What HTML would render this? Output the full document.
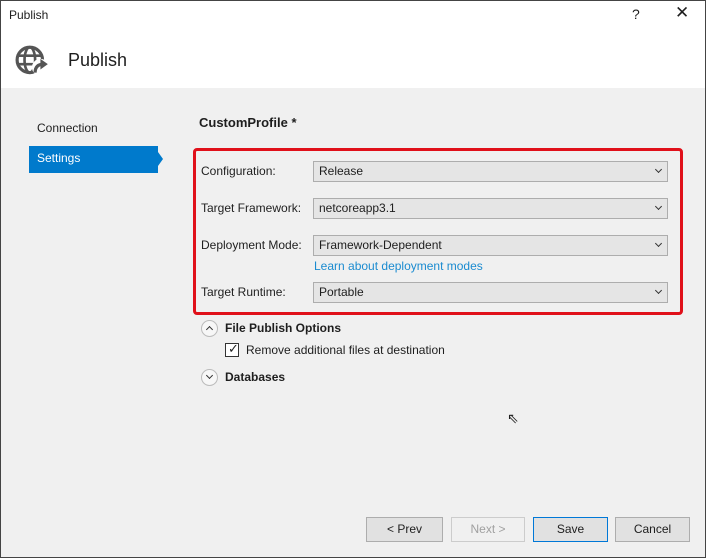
<!DOCTYPE html>
<html><head><style>
*{box-sizing:border-box;margin:0;padding:0}
body{width:706px;height:558px;font-family:"Segoe UI","Liberation Sans",sans-serif;font-size:12px;color:#1e1e1e;background:#f0f0f0;position:relative;overflow:hidden}
.a{position:absolute}
.dd{position:absolute;left:313px;width:355px;height:21px;border:1px solid #adadad;background:#e5e5e5;padding:2px 5px;font-size:12px}
.dd:after{content:"";position:absolute;right:6px;top:5px;width:4px;height:4px;border-right:1px solid #333;border-bottom:1px solid #333;transform:rotate(45deg)}
.lb{position:absolute;left:201px;font-size:12px}
.btn{position:absolute;top:517px;height:25px;border:1px solid #adadad;background:#e1e1e1;text-align:center;line-height:23px;font-size:12px}
.circ{position:absolute;width:17px;height:17px;border:1px solid #bbb;border-radius:50%;background:#f7f7f7}
</style></head><body>
<div class="a" style="left:0;top:0;width:706px;height:31px;background:#fff"></div>
<div class="a" style="left:9px;top:8px;font-size:12px">Publish</div>
<div class="a" style="left:632px;top:6px;font-size:14px">?</div>
<div class="a" style="left:675px;top:3px;font-size:17px">✕</div>
<div class="a" style="left:0;top:31px;width:706px;height:57px;background:#fff"></div>
<svg class="a" style="left:15px;top:44px" width="36" height="34" viewBox="0 0 34 32">
<circle cx="14" cy="15" r="12" fill="none" stroke="#555" stroke-width="3"/>
<ellipse cx="14" cy="15" rx="5" ry="12" fill="none" stroke="#555" stroke-width="2.5"/>
<line x1="2" y1="11" x2="26" y2="11" stroke="#555" stroke-width="2.5"/>
<line x1="2" y1="19" x2="26" y2="19" stroke="#555" stroke-width="2.5"/>
<circle cx="24" cy="22" r="8" fill="#fff"/>
<path d="M19 27 Q19 19 27 19" fill="none" stroke="#555" stroke-width="3"/>
<path d="M24 14 L31 19 L24 24 Z" fill="#555"/>
</svg>
<div class="a" style="left:68px;top:50px;font-size:18px">Publish</div>
<div class="a" style="left:37px;top:121px">Connection</div>
<div class="a" style="left:29px;top:146px;width:129px;height:27px;background:#007acc;color:#fff;padding:5px 8px">Settings</div>
<div class="a" style="left:158px;top:152px;border-left:5px solid #007acc;border-top:7px solid transparent;border-bottom:7px solid transparent"></div>
<div class="a" style="left:199px;top:115px;font-weight:bold;font-size:13px">CustomProfile *</div>
<div class="a" style="left:193px;top:148px;width:490px;height:167px;border:3px solid #e0101a;border-radius:4px"></div>
<div class="lb" style="top:164px">Configuration:</div>
<div class="dd" style="top:161px">Release</div>
<div class="lb" style="top:201px">Target Framework:</div>
<div class="dd" style="top:198px">netcoreapp3.1</div>
<div class="lb" style="top:238px">Deployment Mode:</div>
<div class="dd" style="top:235px">Framework-Dependent</div>
<div class="a" style="left:314px;top:259px;color:#1a8bd0">Learn about deployment modes</div>
<div class="lb" style="top:285px">Target Runtime:</div>
<div class="dd" style="top:282px">Portable</div>
<div class="circ" style="left:201px;top:320px"></div>
<div class="a" style="left:207px;top:327px;width:5px;height:5px;border-left:1px solid #333;border-top:1px solid #333;transform:rotate(45deg)"></div>
<div class="a" style="left:225px;top:321px;font-weight:bold">File Publish Options</div>
<div class="a" style="left:225px;top:343px;width:14px;height:14px;border:1px solid #333;background:#fff"></div>
<div class="a" style="left:228px;top:341px;font-size:13px">✓</div>
<div class="a" style="left:246px;top:343px">Remove additional files at destination</div>
<div class="circ" style="left:201px;top:369px"></div>
<div class="a" style="left:207px;top:373px;width:5px;height:5px;border-right:1px solid #333;border-bottom:1px solid #333;transform:rotate(45deg)"></div>
<div class="a" style="left:225px;top:370px;font-weight:bold">Databases</div>
<div class="a" style="left:507px;top:410px;font-size:14px">⇖</div>
<div class="btn" style="left:366px;width:77px">&lt; Prev</div>
<div class="btn" style="left:451px;width:74px;color:#a0a0a0;background:#f0f0f0;border-color:#ccc">Next &gt;</div>
<div class="btn" style="left:533px;width:75px;border-color:#0078d7">Save</div>
<div class="btn" style="left:615px;width:75px">Cancel</div>
<div class="a" style="left:0;top:0;width:706px;height:558px;border:1px solid #444;pointer-events:none"></div>
</body></html>
